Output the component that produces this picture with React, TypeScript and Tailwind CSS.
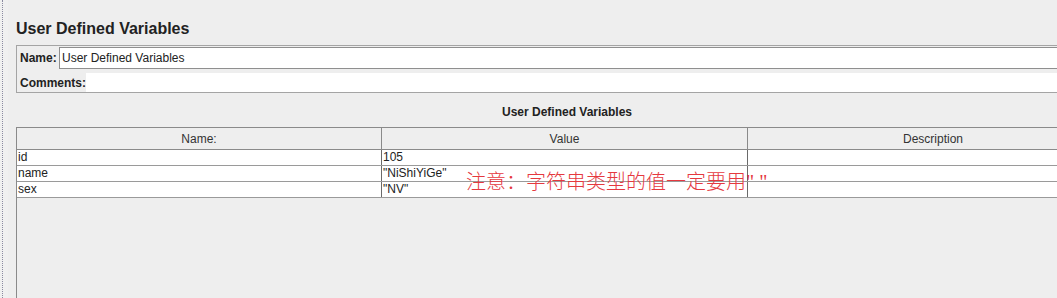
const rows = [
  { name: 'id', value: '105', desc: '' },
  { name: 'name', value: '"NiShiYiGe"', desc: '' },
  { name: 'sex', value: '"NV"', desc: '' },
]

const tabs = [10, 35, 35, 44, 35, 33, 8, 34, 5, 33, 7, 33, 5, 32]

export default function App() {
  return (
    <div className="relative flex h-[298px] w-[1057px] overflow-hidden bg-[#eeeeee] font-['Liberation_Sans',Arial,sans-serif] text-[12px] text-[#222]">
      {/* left splitter gutter */}
      <div className="flex h-full w-[8px] shrink-0 bg-[#f0f0f0] pl-[2px]">
        <div className="h-full border-l border-dotted border-[#8a8aa0]" />
      </div>

      <div className="flex w-[1110px] shrink-0 flex-col">
        {/* toolbar remnants */}
        <div className="flex h-[5px] bg-[#f4f6f8]">
          {tabs.map((w, i) => (
            <div key={i} style={{ width: w }} className={i % 2 === 0 ? 'border-r border-[#a8acb0] bg-[#e2e4e6]' : 'border-r border-[#b8bcc0] bg-[#f6f7f8]'} />
          ))}
        </div>
        <div className="h-[2px] bg-[#8e9093]" />
        <div className="h-[1px] bg-[#e8eaec]" />

        <div className="flex flex-col pl-[8px]">
          <div className="mt-[19px] h-[20px] text-[16px] font-bold leading-[20px] text-[#222]">User Defined Variables</div>

          {/* name / comments box */}
          <div className="mt-[6px] flex flex-col border border-[#a4a4a4] pl-[2px] pt-[1px]">
            <div className="flex h-[22px] items-center">
              <span className="w-[40px] pl-[1px] font-bold">Name:</span>
              <div className="flex h-[22px] flex-1 items-center border border-[#8f8f8f] bg-white pl-[2px]">User Defined Variables</div>
            </div>
            <div className="mt-[4px] flex h-[19px] items-stretch">
              <span className="flex shrink-0 items-center whitespace-nowrap pl-[1px] font-bold">Comments:</span>
              <div className="flex-1 bg-white" />
            </div>
          </div>

          <div className="mt-[12px] h-[14px] text-center font-bold leading-[14px]">User Defined Variables</div>

          {/* table */}
          <div className="mt-[8px] flex h-[200px] flex-col border-l border-t border-[#8a8a8a]">
            <div className="grid h-[22px] grid-cols-[365px_366px_1fr] border-b border-[#8a8a8a] bg-[#eeeeee]">
              <div className="flex items-center justify-center border-r border-[#8a8a8a] text-[#333]">Name:</div>
              <div className="flex items-center justify-center border-r border-[#8a8a8a] text-[#333]">Value</div>
              <div className="flex items-center justify-center text-[#333]">Description</div>
            </div>
            {rows.map((r) => (
              <div key={r.name} className="grid h-[16px] grid-cols-[365px_366px_1fr] border-b border-[#9a9a9a] bg-white leading-[15px]">
                <div className="border-r border-[#6a6a6a] pl-[1px]">{r.name}</div>
                <div className="border-r border-[#6a6a6a] pl-[1px]">{r.value}</div>
                <div className="pl-[1px]">{r.desc}</div>
              </div>
            ))}
          </div>
        </div>
      </div>

      {/* annotation drawn over the table */}
      <div className="absolute left-[466px] top-[171px] whitespace-nowrap font-['Noto_Sans_CJK_SC',sans-serif] text-[20px] font-light leading-[20px] text-[#e5393f]">
        注意：字符串类型的值一定要用<span className="font-['Liberation_Serif',serif]">" "</span>
      </div>
    </div>
  )
}
